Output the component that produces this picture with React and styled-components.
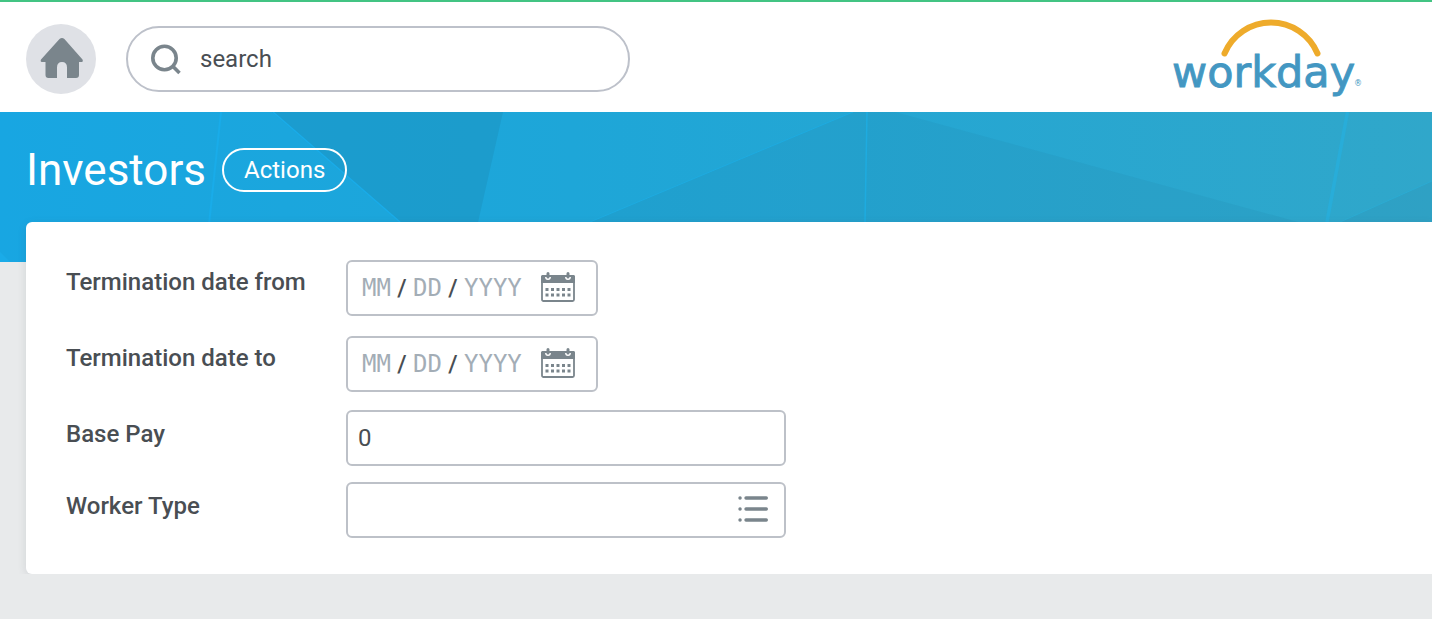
import React, { useState } from 'react'
import styled, { createGlobalStyle } from 'styled-components'

const GlobalStyle = createGlobalStyle`
  * {
    box-sizing: border-box;
  }
  body {
    margin: 0;
    background-color: #e8eaeb;
    color: #494e53;
    font-family: Roboto, "Liberation Sans", sans-serif;
    font-size: 24px;
  }
  input, button {
    font: inherit;
    color: inherit;
  }
`;

const Header = styled.header`
  display: flex;
  align-items: center;
  gap: 30px;
  padding: 17px 68px 13px 26px;
  border-top: 2px solid #43c483;
  background-color: white;
`;

const HomeButton = styled.button`
  display: flex;
  align-items: center;
  justify-content: center;
  flex: none;
  width: 70px;
  height: 70px;
  padding: 0;
  border: none;
  border-radius: 50%;
  background-color: #dfe1e6;
  cursor: pointer;
`;

const SearchBox = styled.label`
  display: flex;
  align-items: center;
  flex: 0 1 504px;
  gap: 18px;
  height: 66px;
  padding: 0 22px;
  border: 2px solid #bdc1ca;
  border-radius: 33px;
`;

const SearchInput = styled.input`
  flex: 1;
  min-width: 0;
  padding: 0;
  border: none;
  outline: none;
  background: none;
  &::placeholder {
    color: #494e53;
    opacity: 1;
  }
`;

const LogoLink = styled.a`
  display: flex;
  margin-left: auto;
`;

const Banner = styled.div`
  position: relative;
  height: 150px;
  background-color: #1ba5dc;
`;

const BannerArt = styled.svg`
  position: absolute;
  inset: 0;
  width: 100%;
  height: 100%;
`;

const TitleBar = styled.div`
  position: relative;
  display: flex;
  align-items: center;
  gap: 16px;
  padding: 32px 26px;
  color: white;
`;

const Title = styled.h1`
  margin: 0;
  font-size: 44px;
  font-weight: 400;
  line-height: 52px;
`;

const ActionsButton = styled.button`
  height: 44px;
  padding: 0 20px;
  border: 2px solid white;
  border-radius: 22px;
  background: none;
  cursor: pointer;
`;

const Card = styled.form`
  position: relative;
  margin: -40px 0 0 26px;
  padding: 28px 40px;
  border-radius: 6px 0 0 6px;
  background-color: white;
  box-shadow: 0 2px 8px rgba(70, 80, 90, 0.14);
`;

const Row = styled.div`
  display: flex;
  align-items: flex-start;
  padding: ${props => props.$date ? "10px" : "8px"} 0;
`;

const Label = styled.label`
  width: 280px;
  margin-top: ${props => props.$date ? "6px" : "8px"};
  font-weight: 500;
  line-height: 32px;
`;

const Field = styled.div`
  display: flex;
  align-items: center;
  width: ${props => props.$date ? "252px" : "440px"};
  height: 56px;
  padding: 0 ${props => props.$date ? "21px 0 14px" : "16px 0 10px"};
  border: 2px solid #bdc1c8;
  border-radius: 6px;
  background-color: white;
`;

const TextInput = styled.input`
  flex: 1;
  min-width: 0;
  padding: 0;
  border: none;
  outline: none;
  background: none;
`;

const DatePart = styled.input`
  width: ${props => props.$wide ? "58px" : "29px"};
  padding: 0;
  border: none;
  outline: none;
  background: none;
  font-family: "DejaVu Sans Mono", monospace;
  &::placeholder {
    color: #a3adb6;
    opacity: 1;
  }
`;

const Slash = styled.span`
  width: 22px;
  font-weight: 500;
  text-align: center;
`;

const IconButton = styled.button`
  display: flex;
  margin-left: auto;
  padding: 0;
  border: none;
  background: none;
  cursor: pointer;
`;

const HomeIcon = () => (
  <svg width="44" height="42" viewBox="0 0 44 42" fill="#7a858c" aria-hidden="true">
    <path d="M20.5 1 Q23 -1 25.400 1 L43.500 21.500 Q44.500 24 42.500 24 H40 V37 Q40 40 37 40 H28 V29.500 Q28 24 23 24 Q18 24 18 29.500 V40 H9.500 Q6.500 40 6.500 37 V24 H3 Q1 24 2 21.500 Z" />
  </svg>
)

const SearchIcon = () => (
  <svg width="32" height="32" viewBox="0 0 32 32" fill="none" stroke="#7a858c" strokeWidth="3.600" aria-hidden="true">
    <circle cx="14.500" cy="15" r="11.700" />
    <path d="M22.800 23.300 L29.500 30" />
  </svg>
)

const Logo = () => (
  <svg width="192" height="80" viewBox="0 0 192 80" role="img" aria-label="workday">
    <path d="M52.500 34.500 A50.400 50.400 0 0 1 145.500 34.500" fill="none" stroke="#eeab2b" strokeWidth="6" strokeLinecap="round" />
    <text x="0" y="67.500" fill="#4397c2" stroke="#4397c2" strokeWidth="0.900" fontFamily="DejaVu Sans, sans-serif" fontSize="43">workday</text>
    <text x="182" y="67" fill="#4397c2" fontFamily="DejaVu Sans, sans-serif" fontSize="8">®</text>
  </svg>
)

const CalendarIcon = () => (
  <svg width="34" height="32" viewBox="0 0 34 32" aria-hidden="true">
    <rect x="1" y="4" width="32" height="25" rx="1.500" fill="white" stroke="#7a858c" strokeWidth="1.800" />
    <path d="M0 11 V4.500 Q0 3 1.500 3 H4 V4.500 Q4 8 7 8 Q10 8 10 4.500 V3 H24 V4.500 Q24 8 27 8 Q30 8 30 4.500 V3 H32.500 Q34 3 34 4.500 V11 Z" fill="#7a858c" />
    <path d="M7 1.500 V5 M27 1.500 V5" stroke="#7a858c" strokeWidth="3" strokeLinecap="round" />
    {[16, 21.5].map(y => [4.5, 10, 15.5, 21, 26.5].map(x => (
      <rect key={`${x}-${y}`} x={x} y={y} width="3" height="3" fill="#7a858c" />
    )))}
  </svg>
)

const ListIcon = () => (
  <svg width="30" height="30" viewBox="0 0 30 30" stroke="#7a858c" strokeWidth="3.400" strokeLinecap="round" aria-hidden="true">
    {[3, 14, 25].map(y => (
      <path key={y} d={`M2 ${y} h0.100 M8 ${y} H28.300`} />
    ))}
  </svg>
)

const BannerBackground = () => (
  <BannerArt viewBox="0 0 1432 150" preserveAspectRatio="none" aria-hidden="true">
    <defs>
      <linearGradient id="sky">
        <stop offset="0" stopColor="#18a6e2" />
        <stop offset="0.400" stopColor="#1ea6d8" />
        <stop offset="1" stopColor="#30a7ca" />
      </linearGradient>
    </defs>
    <rect width="1432" height="150" fill="url(#sky)" />
    <path d="M272 0 H503 L469 150 H446 Z" fill="#1b7fa6" opacity="0.260" />
    <path d="M853 0 L590 110 L494 150 H1440 L1298 110 L895 0 Z" fill="#267fa0" opacity="0.140" />
    <path d="M1340 110 L1432 69 V150 H1250 Z" fill="#267fa0" opacity="0.120" />
    <path d="M0 140 L10 150 H0 Z" fill="#1aabe8" />
    <path d="M221 0 L205 150" stroke="#19ace9" strokeWidth="2" />
    <path d="M273 0 L400 110" stroke="#19ace9" strokeWidth="1.500" />
    <path d="M853 0 L590 110" stroke="#1eabe0" />
    <path d="M867 0 L865 110" stroke="#1eabe0" strokeWidth="1.500" />
    <path d="M1347.500 0 L1327 110" stroke="#28add9" strokeWidth="3.500" />
    <path d="M1340 110 L1432 69" stroke="#2cabd2" />
  </BannerArt>
)

const DateField = ({ id, label }) => (
  <Row $date>
    <Label $date htmlFor={id}>{label}</Label>
    <Field $date>
      <DatePart id={id} placeholder="MM" maxLength={2} />
      <Slash>/</Slash>
      <DatePart placeholder="DD" maxLength={2} aria-label={`${label} day`} />
      <Slash>/</Slash>
      <DatePart $wide placeholder="YYYY" maxLength={4} aria-label={`${label} year`} />
      <IconButton type="button" aria-label="Open calendar">
        <CalendarIcon />
      </IconButton>
    </Field>
  </Row>
)

const App = () => {
  const [basePay, setBasePay] = useState('0')
  const [workerType, setWorkerType] = useState('')

  return (
    <>
      <GlobalStyle />
      <Header>
        <HomeButton aria-label="Home">
          <HomeIcon />
        </HomeButton>
        <SearchBox>
          <SearchIcon />
          <SearchInput placeholder="search" aria-label="search" />
        </SearchBox>
        <LogoLink href="#">
          <Logo />
        </LogoLink>
      </Header>
      <main>
        <Banner>
          <BannerBackground />
          <TitleBar>
            <Title>Investors</Title>
            <ActionsButton>Actions</ActionsButton>
          </TitleBar>
        </Banner>
        <Card>
          <DateField id="date-from" label="Termination date from" />
          <DateField id="date-to" label="Termination date to" />
          <Row>
            <Label htmlFor="base-pay">Base Pay</Label>
            <Field>
              <TextInput id="base-pay" value={basePay} onChange={(e)=>setBasePay(e.target.value)} />
            </Field>
          </Row>
          <Row>
            <Label htmlFor="worker-type">Worker Type</Label>
            <Field>
              <TextInput id="worker-type" value={workerType} onChange={(e)=>setWorkerType(e.target.value)} />
              <IconButton type="button" aria-label="Show worker types">
                <ListIcon />
              </IconButton>
            </Field>
          </Row>
        </Card>
      </main>
    </>
  )
}

export default App
